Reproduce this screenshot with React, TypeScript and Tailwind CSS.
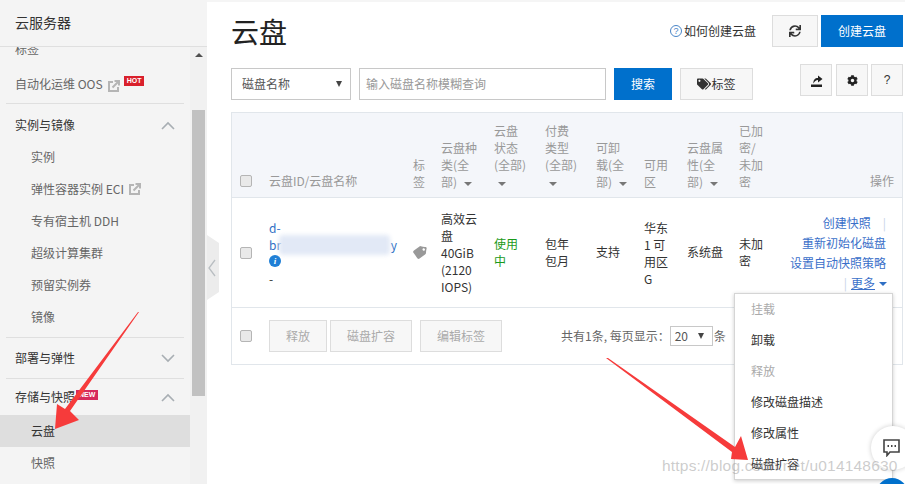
import { FaSync, FaTags, FaTag, FaCog } from "react-icons/fa";

const CJK = "font-['Microsoft_YaHei','Noto_Sans_CJK_SC','Noto_Sans',sans-serif]";

function Ext() {
  return (
    <svg width="12" height="12" viewBox="0 0 12 12" className="inline-block">
      <path d="M5 2H1v9h9V7" fill="none" stroke="#b5b5b5" strokeWidth="2" />
      <path d="M4.5 7.5 10 2M6.5 1H11v4.5" fill="none" stroke="#b5b5b5" strokeWidth="2" />
    </svg>
  );
}
function Chevron({ up }: { up?: boolean }) {
  return (
    <svg width="14" height="9" viewBox="0 0 14 9" className="mr-[15px]">
      <path d={up ? "M1 8l6-6 6 6" : "M1 1l6 6 6-6"} fill="none" stroke="#a8aeb3" strokeWidth="1.6" />
    </svg>
  );
}
function Sub({ children, active }: { children: React.ReactNode; active?: boolean }) {
  return (
    <div className={`h-8 flex items-center pl-[31px] gap-[5px] ${active ? "bg-[#dedede] text-[#333]" : "text-[#666]"}`}>
      {children}
    </div>
  );
}
function Check() {
  return <span className="block w-3 h-3 rounded-[2px] border border-[#b5b5b5] bg-[#e9e9e9]" />;
}
function Caret({ c = "#777" }: { c?: string }) {
  return <span className="inline-block align-middle ml-1 w-0 h-0 border-x-[4px] border-x-transparent border-t-[4px]" style={{ borderTopColor: c }} />;
}
function Lines({ items }: { items: React.ReactNode[] }) {
  return (
    <div className="leading-[17px]">
      {items.map((t, i) => (
        <div key={i} className="whitespace-nowrap">{t}</div>
      ))}
    </div>
  );
}
function Divider() {
  return <div className="h-px bg-[#dfdfdf] ml-1.5 mr-1.5" />;
}
function Section({ children, up }: { children: React.ReactNode; up?: boolean }) {
  return (
    <div className="h-[42px] flex items-center justify-between pl-[15px] text-[#333]">
      <div className="flex items-center">{children}</div>
      <Chevron up={up} />
    </div>
  );
}

export default function App() {
  return (
    <div className={`relative w-[905px] h-[484px] overflow-hidden bg-white flex text-[12px] ${CJK}`}>
      {/* Sidebar */}
      <aside className="w-[207px] h-full bg-[#f4f4f4] flex flex-col shrink-0">
        <div className="h-[47px] border-b border-[#dfdfdf] flex items-center pl-[15px] pb-0.5 text-[14px] text-[#333] shrink-0 z-10 bg-[#f4f4f4]">
          云服务器
        </div>
        <div className="flex-1 flex min-h-0">
          <div className="w-[190px] overflow-hidden">
            <div className="-mt-[14px]">
              <div className="h-8 flex items-center pl-[15px] text-[#666]">标签</div>
              <div className="h-[38px] flex items-center pl-[15px] text-[#666]">
                自动化运维 OOS
                <span className="ml-[5px] mt-1 flex"><Ext /></span>
                <span className="ml-1 -mt-[6px] bg-[#d9202c] text-white text-[7px] font-bold font-['Liberation_Sans'] leading-[10px] px-[3px] h-[10px]">HOT</span>
              </div>
              <Divider />
              <Section up>实例与镜像</Section>
              <div className="-mt-[5px]">
                <Sub>实例</Sub>
                <Sub>弹性容器实例 ECI <Ext /></Sub>
                <Sub>专有宿主机 DDH</Sub>
                <Sub>超级计算集群</Sub>
                <Sub>预留实例券</Sub>
                <Sub>镜像</Sub>
              </div>
              <div className="h-1" />
              <Divider />
              <div className="h-[40px] flex items-center justify-between pl-[15px] text-[#333]">
                部署与弹性
                <Chevron />
              </div>
              <Divider />
              <div className="h-[36px] flex items-center justify-between pl-[15px] text-[#333]">
                <div className="flex items-center">
                  存储与快照
                  <span className="ml-[1px] -mt-1 bg-[#d62a5c] text-white text-[7px] font-bold font-['Liberation_Sans'] leading-[10px] px-[3px] h-[10px]">NEW</span>
                </div>
                <Chevron up />
              </div>
              <Sub active>云盘</Sub>
              <Sub>快照</Sub>
            </div>
          </div>
          <div className="w-[17px] bg-[#f1f1f1] flex flex-col items-center">
            <span className="mt-[6px] w-0 h-0 border-x-[4px] border-x-transparent border-b-[4px] border-b-[#505050]" />
            <div className="mt-[53px] w-[13px] h-[286px] bg-[#c1c1c1]" />
          </div>
        </div>
      </aside>

      {/* Collapse tab */}
      <div className="absolute left-[207px] top-[235px] w-3 h-[65px] bg-[#ececec] flex items-center [clip-path:polygon(0_0,100%_8px,100%_57px,0_100%)]">
        <svg width="10" height="18" viewBox="0 0 10 18"><path d="M8 1 2 9l6 8" fill="none" stroke="#b9bec2" strokeWidth="1.3" /></svg>
      </div>

      {/* Main */}
      <main className="flex-1 min-w-0 pl-[24px] pr-[2px] border-t-2 border-[#f5f5f5]">
        <div className="flex items-center h-[32px] mt-[13px]">
          <h1 className="text-[28px] leading-[32px] text-[#222] font-normal">云盘</h1>
          <div className="ml-auto flex items-center h-8">
            <span className="w-3 h-3 rounded-full border border-[#4a86c8] text-[#4a86c8] text-[9px] leading-[11px] text-center font-['Liberation_Sans']">?</span>
            <span className="ml-[2px] text-[#333]">如何创建云盘</span>
            <button className="ml-4 w-[46px] h-8 border border-[#ddd] bg-[#f7f7f7] flex items-center justify-center text-[#333]"><FaSync size={12} /></button>
            <button className="ml-[3px] w-[82px] h-8 bg-[#0070cc] text-white">创建云盘</button>
          </div>
        </div>
        <div className="flex items-start h-[32px] mt-[21px]">
          <div className="w-[120px] h-8 border border-[#c8c8c8] flex items-center justify-between pl-[10px] pr-2 text-[#555]">
            磁盘名称
            <span className="w-0 h-0 border-x-[3.5px] border-x-transparent border-t-[6px] border-t-[#444]" />
          </div>
          <div className="ml-2 w-[247px] h-8 border border-[#c8c8c8] flex items-center pl-[6px] text-[#999]">输入磁盘名称模糊查询</div>
          <button className="ml-2 w-[58px] h-8 bg-[#0070cc] text-white">搜索</button>
          <button className="ml-2 w-[73px] h-8 border border-[#ddd] bg-[#f7f7f7] flex items-center justify-center text-[#333]"><FaTags size={14} />标签</button>
          <div className="ml-auto flex -mt-1">
            <button className="w-8 h-8 border border-[#ddd] bg-[#f7f7f7] flex items-center justify-center">
              <svg width="13" height="13" viewBox="0 0 13 13"><path d="M1 10.5h11V13H1z" fill="#222" /><path d="M3.5 9.5C3 6 5 4 8 4V1.5L12.5 5 8 8.5V6C6 6 4.5 7.5 3.5 9.5z" fill="#222" /></svg>
            </button>
            <button className="ml-1 w-8 h-8 border border-[#ddd] bg-[#f7f7f7] flex items-center justify-center text-[#222]"><FaCog size={11} /></button>
            <button className="ml-[3px] w-8 h-8 border border-[#ddd] bg-[#f7f7f7] text-[#333] font-['Liberation_Sans']">?</button>
          </div>
        </div>
        {/* Table */}
        <div className="mt-3 border border-[#e1e6eb]">
          <div className="grid grid-cols-[37px_144px_28px_53px_51px_51px_48px_43px_52px_51px_1fr] h-[85px] bg-[#f4f6fa] border-b border-[#e1e6eb] items-end pb-[7px] text-[#999]">
            <div className="pl-2 pb-[3px]"><Check /></div>
            <div>云盘ID/云盘名称</div>
            <Lines items={["标", "签"]} />
            <Lines items={["云盘种", "类(全", <>部) <Caret /></>]} />
            <Lines items={["云盘", "状态", "(全部)", <Caret />]} />
            <Lines items={["付费", "类型", "(全部)", <Caret />]} />
            <Lines items={["可卸", "载(全", <>部) <Caret /></>]} />
            <Lines items={["可用", "区"]} />
            <Lines items={["云盘属", "性(全", <>部) <Caret /></>]} />
            <Lines items={["已加", "密/", "未加", "密"]} />
            <div className="text-right pr-2">操作</div>
          </div>
          <div className="relative grid grid-cols-[37px_144px_28px_53px_51px_51px_48px_43px_52px_51px_1fr] h-[110px] border-b border-[#e1e6eb] items-center text-[#333]">
            <div className="pl-2"><Check /></div>
            <div className="leading-[17px] text-[#2f6fc4]">
              <div>d-</div>
              <div className="flex justify-between w-[128px]"><span>br</span><span>y</span></div>
              <div className="w-3 h-3 mt-[2px] rounded-full bg-[#1f7fd6] text-white text-[9px] leading-3 text-center italic font-bold font-['Liberation_Serif']">i</div>
              <div className="mt-[3px] text-[#333]">-</div>
            </div>
            <div className="text-[#999]"><FaTag size={13} className="-scale-x-100 rotate-[10deg]" /></div>
            <Lines items={["高效云", "盘", "40GiB", "(2120", "IOPS)"]} />
            <div className="text-[#1a9a1a] -mt-0.5"><Lines items={["使用", "中"]} /></div>
            <div className="-mt-0.5"><Lines items={["包年", "包月"]} /></div>
            <div className="-mt-0.5">支持</div>
            <Lines items={["华东", "1 可", "用区", "G"]} />
            <div className="-mt-0.5">系统盘</div>
            <div className="-mt-0.5"><Lines items={["未加", "密"]} /></div>
            <div className="text-right pr-4 leading-5 text-[#3a6fc9] whitespace-nowrap">
              <div>创建快照<span className="ml-3 text-[#c9d3e6]">|</span></div>
              <div>重新初始化磁盘</div>
              <div>设置自动快照策略</div>
              <div className="-mr-px"><span className="text-[#c9d3e6] mr-1">|</span><span className="underline">更多</span><Caret c="#2f6fc4" /></div>
            </div>
            <div className="absolute left-[47px] top-[37px] w-[111px] h-[20px] rounded-sm bg-[#e2e9f6] blur-[2px]" />
          </div>
          <div className="flex items-center h-[56px]">
            <div className="w-[37px] pl-2 shrink-0"><Check /></div>
            <div className="flex text-[#aaa]">
              <button className="w-[58px] h-8 border border-[#ddd] bg-[#f7f7f7]">释放</button>
              <button className="ml-[3px] w-[82px] h-8 border border-[#ddd] bg-[#f7f7f7]">磁盘扩容</button>
              <button className="ml-2 w-[82px] h-8 border border-[#ddd] bg-[#f7f7f7]">编辑标签</button>
            </div>
            <div className="ml-[59px] flex items-center text-[#666] whitespace-nowrap">
              共有1条, 每页显示：
              <span className="w-[43px] h-[20px] border border-[#c8c8c8] flex items-center justify-between px-1 text-[#555]">
                20
                <span className="w-0 h-0 border-x-[3.5px] border-x-transparent border-t-[6px] border-t-[#444] mr-1" />
              </span>
              <span className="ml-px">条</span>
            </div>
          </div>
        </div>
      </main>

      {/* More menu */}
      <div className="absolute left-[734px] top-[293px] w-[159px] h-[187px] bg-white border border-[#d5d5d5] shadow-[0_1px_4px_rgba(0,0,0,0.2)] pl-4 [&>div]:-translate-y-px">
        {[["挂载", true], ["卸载"], ["释放", true], ["修改磁盘描述"], ["修改属性"], ["磁盘扩容"]].map(([t, dis], i) => (
          <div key={i} className={`h-[31px] flex items-center ${dis ? "text-[#aaa]" : "text-[#333]"}`}>{t as string}</div>
        ))}
      </div>

      {/* Chat bubble */}
      <div className="absolute left-[871px] top-[426px] w-11 h-11 rounded-full bg-white shadow-[0_0_5px_rgba(0,0,0,0.2)] flex items-center justify-center pr-1">
        <svg width="17" height="18" viewBox="0 0 17 18"><path d="M1 1h15v12H7l-3 3.5V13H1z" fill="#fff" stroke="#444" strokeWidth="1.6" /><path d="M4.5 7h1.5M8 7h1.5M11.5 7H13" stroke="#444" strokeWidth="1.8" /></svg>
      </div>
      <div className="absolute left-[876px] top-[478px] w-8 h-8 rounded-full bg-[#0070cc]" />

      {/* Watermark */}
      <div className="absolute left-[662px] top-[457px] text-[15.5px] leading-[18px] text-[#9a9a9a]/50 font-['Liberation_Sans'] tracking-[0.2px] whitespace-nowrap">https://blog.csdn.net/u014148630</div>

      {/* Annotation arrows */}
      <svg className="absolute left-0 top-0 pointer-events-none" width="905" height="484" viewBox="0 0 905 484">
        <path d="M139 312 L70 411 L79 420 L55 429 L57 404 L65 409 L138 312Z" fill="#f63b3b" />
        <path d="M608 358 L735 447 L741 436 L748 460 L731 459 L732 452 L606 358Z" fill="#f63b3b" />
      </svg>
    </div>
  );
}
